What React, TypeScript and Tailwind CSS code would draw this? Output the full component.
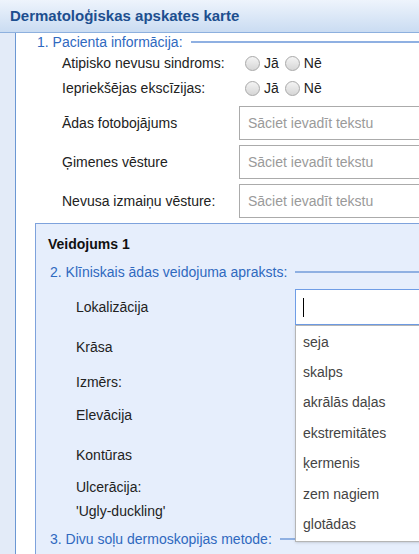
import React from 'react';

const font = { fontFamily: '"Liberation Sans", Arial, sans-serif' };

function Legend({ text, lineClass = 'flex-1' }: { text: string; lineClass?: string }) {
    return (
        <div className="flex h-[18px] items-center">
            <span className="shrink-0 text-[14px] leading-[18px] whitespace-nowrap text-[#2f69bf]">{text}</span>
            <div className={`ml-[8px] border-t-[2px] border-[#8fb0e2] ${lineClass}`} />
        </div>
    );
}

function Radio({ label }: { label: string }) {
    return (
        <span className="flex items-center">
            <span className="h-[15px] w-[15px] rounded-full border border-[#a9a9a9] bg-gradient-to-b from-[#f4f4f4] to-[#d6d6d6]" />
            <span className="ml-[4px] text-[14px] text-[#222]">{label}</span>
        </span>
    );
}

function RadioRow({ label }: { label: string }) {
    return (
        <div className="flex h-[25px] items-center">
            <span className="w-[223px] shrink-0 pl-[46px] text-[14px] whitespace-nowrap text-[#222]">{label}</span>
            <div className="ml-[6px] flex shrink-0 gap-[6px]">
                <Radio label="Jā" />
                <Radio label="Nē" />
            </div>
        </div>
    );
}

function TextRow({ label }: { label: string }) {
    return (
        <div className="flex h-[34px] items-center">
            <span className="w-[223px] shrink-0 pl-[46px] text-[14px] whitespace-nowrap text-[#222]">{label}</span>
            <div className="flex h-[34px] w-[220px] shrink-0 items-center border border-[#ababab] bg-white pl-[8px] text-[14px] whitespace-nowrap text-[#9a9a9a]">
                Sāciet ievadīt tekstu
            </div>
        </div>
    );
}

function Row({ label, h }: { label: string; h: string }) {
    return <div className={`flex items-center pl-[28px] text-[14px] text-[#222] ${h}`}>{label}</div>;
}

const options = ['seja', 'skalps', 'akrālās daļas', 'ekstremitātes', 'ķermenis', 'zem nagiem', 'glotādas'];

export default function App() {
    return (
        <div className="h-[554px] w-[419px] overflow-hidden bg-white" style={font}>
            <header className="flex h-[33px] items-center border-b border-[#8db0de] bg-gradient-to-b from-[#eef4fc] to-[#cadcf2] pl-[10px]">
                <h1 className="text-[15px] font-bold text-[#1d4f8f]">Dermatoloģiskas apskates karte</h1>
            </header>
            <div className="flex min-h-[521px]">
                <div className="w-[16px] shrink-0 border-r border-[#6b97d3] bg-[#e3ebf8]" />
                <div className="flex w-[420px] shrink-0 flex-col">
                    <div className="pl-[21px]">
                        <Legend text="1. Pacienta informācija:" />
                    </div>
                    <RadioRow label="Atipisko nevusu sindroms:" />
                    <RadioRow label="Iepriekšējas ekscīzijas:" />
                    <div className="mt-[5px] flex flex-col gap-[5px]">
                        <TextRow label="Ādas fotobojājums" />
                        <TextRow label="Ģimenes vēsture" />
                        <TextRow label="Nevusa izmaiņu vēsture:" />
                    </div>
                    <div className="relative mt-[5px] ml-[19px] w-[420px] border border-[#7ea2dc] bg-[#e6eefc] pt-[11px] pl-[12px]">
                        <div className="text-[14px] leading-[18px] font-bold text-[#111]">Veidojums 1</div>
                        <div className="mt-[10px] pl-[2px]">
                            <Legend text="2. Klīniskais ādas veidojuma apraksts:" />
                        </div>
                        <div className="mt-[8px] flex h-[36px] items-center">
                            <span className="w-[247px] shrink-0 pl-[28px] text-[14px] text-[#222]">Lokalizācija</span>
                            <div className="relative h-[36px] w-[160px] shrink-0 border border-[#6f9de6] bg-white">
                                <span className="absolute top-[8px] left-[7px] h-[19px] w-px bg-black" />
                                <ul className="absolute top-[35px] left-[-1px] w-[160px] border border-[#b5b5b5] bg-white py-[1px] shadow-sm">
                                    {options.map((o) => (
                                        <li key={o} className="flex h-[30.4px] items-center pl-[7px] text-[14px] text-[#444]">
                                            {o}
                                        </li>
                                    ))}
                                </ul>
                            </div>
                        </div>
                        <Row label="Krāsa" h="h-[44px]" />
                        <Row label="Izmērs:" h="h-[26px]" />
                        <Row label="Elevācija" h="h-[40px]" />
                        <Row label="Kontūras" h="h-[40px]" />
                        <Row label="Ulcerācija:" h="h-[24px]" />
                        <Row label="'Ugly-duckling'" h="h-[24px]" />
                        <div className="mt-[7px] pl-[2px]">
                            <Legend text="3. Divu soļu dermoskopijas metode:" />
                        </div>
                        <div className="h-[40px]" />
                    </div>
                </div>
            </div>
        </div>
    );
}
